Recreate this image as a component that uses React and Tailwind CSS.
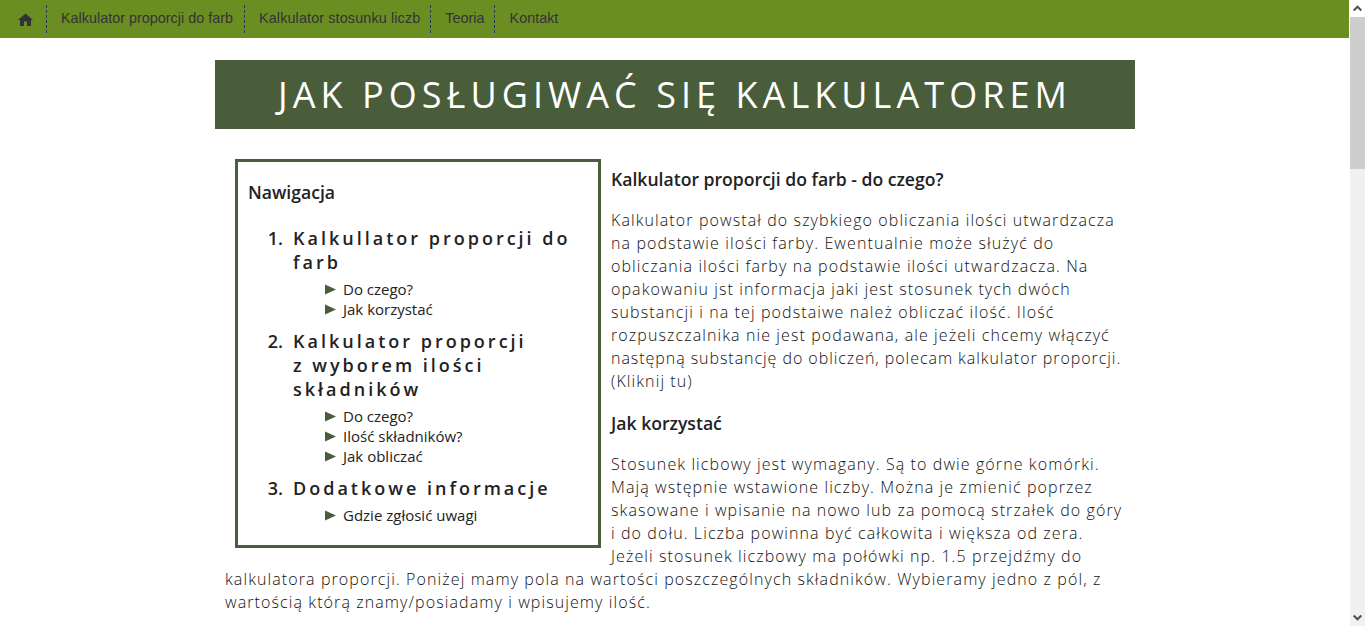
import React from "react";

const os = "font-['Open_Sans',sans-serif]";

function Bar({ children, className }) {
  return (
    <a className={`h-[28px] flex items-center text-[14.4px] text-[#333] ${className}`}>
      {children}
    </a>
  );
}

function Section({ n, title, items }) {
  return (
    <li className="flex">
      <span className="w-[45px] shrink-0 text-right pr-[10px] text-[18px] leading-[24px] font-semibold text-[#222]">{n}.</span>
      <div className="min-w-0">
        <div className="text-[18px] leading-[24px] font-semibold tracking-[3px] text-[#222]">{title}</div>
        <ul className="mt-[5px] mb-[10px]">
          {items.map((t) => (
            <li key={t} className="flex items-center h-[20px] pl-[32px] text-[15px] text-[#222]">
              <svg width="11" height="11" viewBox="0 0 11 11" className="shrink-0 mr-[7px]">
                <path d="M0 0.5 L11 5.5 L0 10.5 Z" fill="#4a5d3a" />
              </svg>
              {t}
            </li>
          ))}
        </ul>
      </div>
    </li>
  );
}

export default function App() {
  return (
    <div className="flex h-[626px] w-[1365px] overflow-hidden bg-white">
      <div className="w-[1350px] shrink-0 min-w-0">
        <nav className="h-[38px] bg-[#6b8e23] flex items-center pl-[5px] mr-[1px] font-['Liberation_Sans',sans-serif]">
          <a className="px-[13px] h-[28px] flex items-center border-r border-dashed border-[#1f3a5f]">
            <svg width="15" height="13" viewBox="0 0 15 13">
              <path d="M7.5 0.5 L15 7 H13 V13 H9 V8.5 H6 V13 H2 V7 H0 Z" fill="#333" />
            </svg>
          </a>
          <Bar className="pl-[14px] pr-[11px] border-r border-dashed border-[#1f3a5f]">Kalkulator proporcji do farb</Bar>
          <Bar className="pl-[14px] pr-[10px] tracking-[0.12px] border-r border-dashed border-[#1f3a5f]">Kalkulator stosunku liczb</Bar>
          <Bar className="pl-[14px] pr-[9px] border-r border-dashed border-[#1f3a5f]">Teoria</Bar>
          <Bar className="pl-[15px] pr-[10px]">Kontakt</Bar>
        </nav>
        <main className={`w-[920px] mx-auto mt-[22px] ${os}`}>
          <h1 className="h-[69px] bg-[#4a5d3a] text-white text-center text-[36px] leading-[69px] font-normal tracking-[5.04px]">
            JAK POSŁUGIWAĆ SIĘ KALKULATOREM
          </h1>
          <div className="px-[10px] pt-[30px]">
            <aside className="float-left w-[366px] h-[389px] ml-[10px] mr-[10px] border-[3px] border-[#4a5d3a] pt-[18px] pl-[10px] pr-[10px] mb-[4px]">
              <h2 className="text-[17.6px] leading-[25px] font-semibold text-[#222] mb-[21px]">Nawigacja</h2>
              <ol>
                <Section n={1} title="Kalkullator proporcji do farb" items={["Do czego?", "Jak korzystać"]} />
                <Section n={2} title={<>Kalkulator proporcji<br />z wyborem ilości<br />składników</>} items={["Do czego?", "Ilość składników?", "Jak obliczać"]} />
                <Section n={3} title="Dodatkowe informacje" items={["Gdzie zgłosić uwagi"]} />
              </ol>
            </aside>
            <h3 className="text-[17.6px] leading-[25px] font-semibold text-[#222] pt-[8px] mb-[17px]">Kalkulator proporcji do farb - do czego?</h3>
            <p className="text-[16px] leading-[23px] font-light tracking-[1.1px] text-[#111] mb-[18px] whitespace-nowrap">
              Kalkulator powstał do szybkiego obliczania ilości utwardzacza<br />
              na podstawie ilości farby. Ewentualnie może służyć do<br />
              obliczania ilości farby na podstawie ilości utwardzacza. Na<br />
              opakowaniu jst informacja jaki jest stosunek tych dwóch<br />
              substancji i na tej podstaiwe należ obliczać ilość. Ilość<br />
              rozpuszczalnika nie jest podawana, ale jeżeli chcemy włączyć<br />
              <span className="tracking-[0.95px]">następną substancję do obliczeń, polecam kalkulator proporcji.</span><br />
              (Kliknij tu)
            </p>
            <h3 className="text-[17.6px] leading-[25px] font-semibold text-[#222] mb-[17px]">Jak korzystać</h3>
            <p className="text-[16px] leading-[23px] font-light tracking-[1.1px] text-[#111] whitespace-nowrap">
              Stosunek licbowy jest wymagany. Są to dwie górne komórki.<br />
              Mają wstępnie wstawione liczby. Można je zmienić poprzez<br />
              skasowane i wpisanie na nowo lub za pomocą strzałek do góry<br />
              i do dołu. Liczba powinna być całkowita i większa od zera.<br />
              Jeżeli stosunek liczbowy ma połówki np. 1.5 przejdźmy do<br />
              kalkulatora proporcji. Poniżej mamy pola na wartości poszczególnych składników. Wybieramy jedno z pól, z<br />
              wartością którą znamy/posiadamy i wpisujemy ilość.
            </p>
          </div>
        </main>
      </div>
      <div className="w-[15px] shrink-0 h-full bg-[#f0f0f0] flex flex-col">
        <div className="h-[17px] bg-white flex items-center justify-center">
          <svg width="9" height="7" viewBox="0 0 9 7"><path d="M0.7 5.5 L4.5 1.7 L8.3 5.5" fill="none" stroke="#505050" strokeWidth="2" /></svg>
        </div>
        <div className="h-[152px] bg-[#cdcdcd]" />
        <div className="flex-1" />
        <div className="h-[17px] flex items-center justify-center">
          <svg width="9" height="7" viewBox="0 0 9 7"><path d="M0.7 1.5 L4.5 5.3 L8.3 1.5" fill="none" stroke="#505050" strokeWidth="2" /></svg>
        </div>
      </div>
    </div>
  );
}
